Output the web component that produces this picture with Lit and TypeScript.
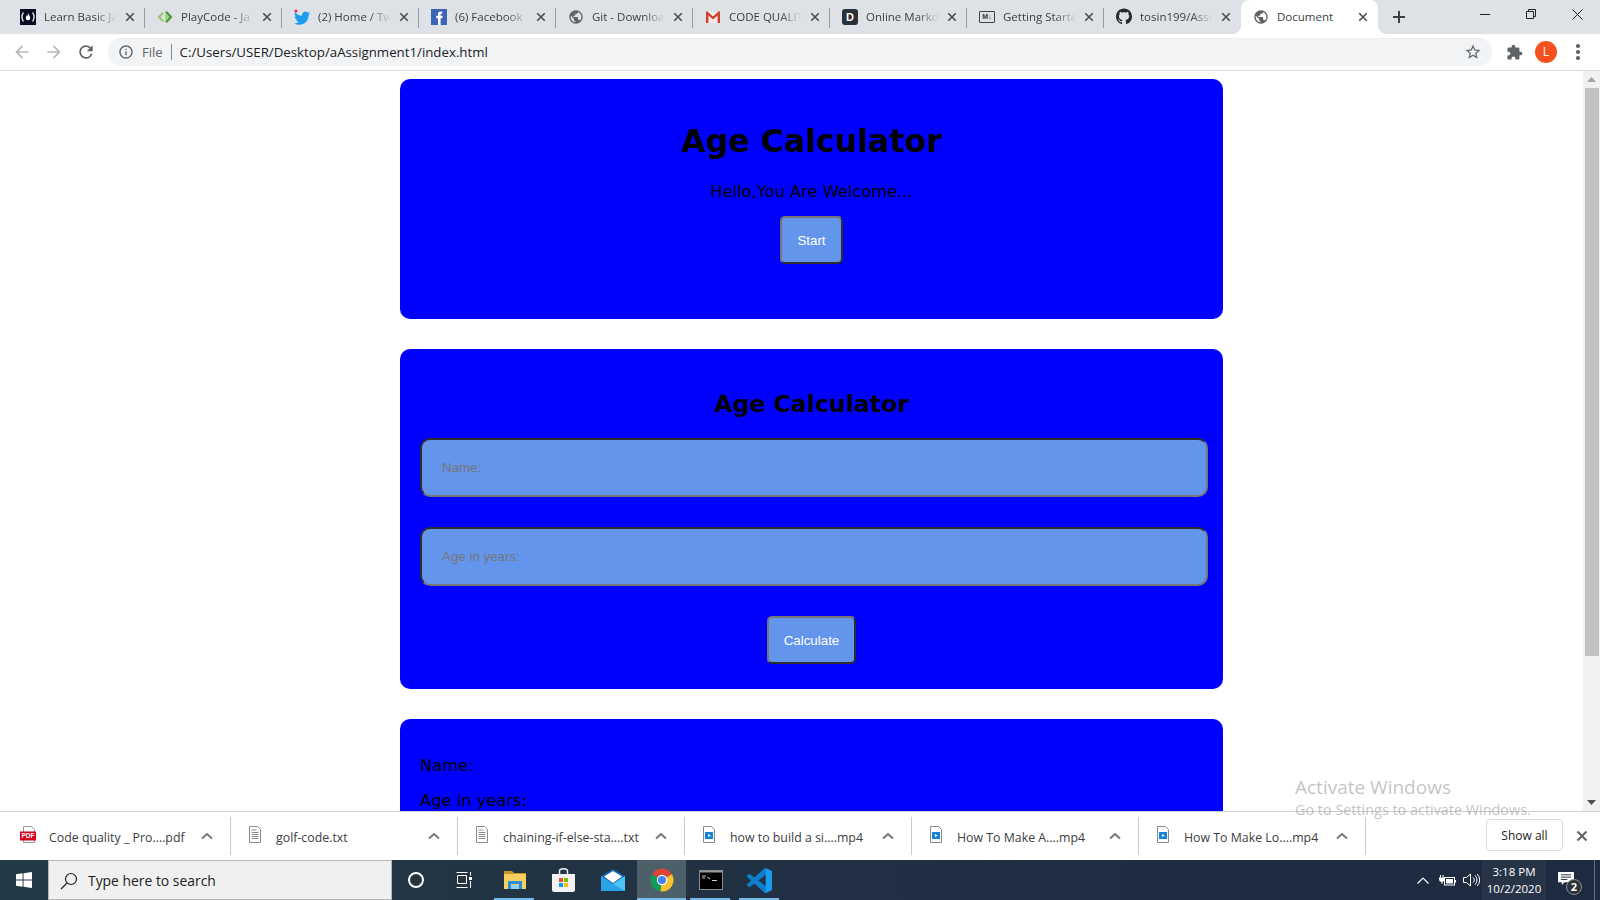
import { LitElement, css, html, svg } from "lit";
import { customElement } from "lit/decorators.js";

const UI_FONT = css`"Open Sans", "Noto Sans", sans-serif`;

const PATHS = {
  globe:
    "M12 2C6.48 2 2 6.48 2 12s4.48 10 10 10 10-4.48 10-10S17.52 2 12 2zm-1 17.93c-3.95-.49-7-3.85-7-7.93 0-.62.08-1.21.21-1.79L9 15v1c0 1.1.9 2 2 2v1.93zm6.9-2.54c-.26-.81-1-1.39-1.9-1.39h-1v-3c0-.55-.45-1-1-1H8v-2h2c.55 0 1-.45 1-1V7h2c1.1 0 2-.9 2-2v-.41c2.93 1.19 5 4.06 5 7.41 0 2.08-.8 3.97-2.1 5.39z",
  twitter:
    "M23.953 4.57a10 10 0 01-2.825.775 4.958 4.958 0 002.163-2.723c-.951.555-2.005.959-3.127 1.184a4.92 4.92 0 00-8.384 4.482C7.69 8.095 4.067 6.13 1.64 3.162a4.822 4.822 0 00-.666 2.475c0 1.71.87 3.213 2.188 4.096a4.904 4.904 0 01-2.228-.616v.06a4.923 4.923 0 003.946 4.827 4.996 4.996 0 01-2.212.085 4.936 4.936 0 004.604 3.417 9.867 9.867 0 01-6.102 2.105c-.39 0-.779-.023-1.17-.067a13.995 13.995 0 007.557 2.209c9.053 0 13.998-7.496 13.998-13.985 0-.21 0-.42-.015-.63A9.935 9.935 0 0024 4.59z",
  github:
    "M8 0C3.58 0 0 3.58 0 8c0 3.54 2.29 6.53 5.47 7.59.4.07.55-.17.55-.38 0-.19-.01-.82-.01-1.49-2.01.37-2.53-.49-2.69-.94-.09-.23-.48-.94-.82-1.13-.28-.15-.68-.52-.01-.53.63-.01 1.08.58 1.23.82.72 1.21 1.87.87 2.33.66.07-.52.28-.87.51-1.07-1.78-.2-3.64-.89-3.64-3.95 0-.87.31-1.59.82-2.15-.08-.2-.36-1.02.08-2.12 0 0 .67-.21 2.2.82.64-.18 1.32-.27 2-.27.68 0 1.36.09 2 .27 1.53-1.04 2.2-.82 2.2-.82.44 1.1.16 1.92.08 2.12.51.56.82 1.27.82 2.15 0 3.07-1.87 3.75-3.65 3.95.29.25.54.73.54 1.48 0 1.07-.01 1.93-.01 2.2 0 .21.15.46.55.38A8.013 8.013 0 0016 8c0-4.42-3.58-8-8-8z",
  back: "M20 11H7.83l5.59-5.59L12 4l-8 8 8 8 1.41-1.41L7.83 13H20v-2z",
  forward: "M4 11h12.17l-5.59-5.59L12 4l8 8-8 8-1.41-1.41L16.17 13H4v-2z",
  reload:
    "M17.65 6.35A7.958 7.958 0 0012 4c-4.42 0-7.99 3.58-7.99 8s3.57 8 7.99 8c3.73 0 6.84-2.55 7.73-6h-2.08A5.99 5.99 0 0112 18c-3.31 0-6-2.69-6-6s2.69-6 6-6c1.66 0 3.14.69 4.22 1.78L13 11h7V4l-2.35 2.35z",
  info: "M11 7h2v2h-2zm0 4h2v6h-2zm1-9C6.48 2 2 6.48 2 12s4.48 10 10 10 10-4.48 10-10S17.52 2 12 2zm0 18c-4.41 0-8-3.59-8-8s3.59-8 8-8 8 3.59 8 8-3.59 8-8 8z",
  star: "M22 9.24l-7.19-.62L12 2 9.19 8.63 2 9.24l5.46 4.73L5.82 21 12 17.27 18.18 21l-1.63-7.03L22 9.24zM12 15.4l-3.76 2.27 1-4.28-3.32-2.88 4.38-.38L12 6.1l1.71 4.04 4.38.38-3.32 2.88 1 4.28L12 15.4z",
  puzzle:
    "M20.5 11H19V7c0-1.1-.9-2-2-2h-4V3.5C13 2.12 11.88 1 10.5 1S8 2.12 8 3.5V5H4c-1.1 0-1.99.9-1.99 2v3.8H3.5c1.49 0 2.7 1.21 2.7 2.7s-1.21 2.7-2.7 2.7H2V20c0 1.1.9 2 2 2h3.8v-1.5c0-1.49 1.21-2.7 2.7-2.7 1.49 0 2.7 1.21 2.7 2.7V22H17c1.1 0 2-.9 2-2v-4h1.5c1.38 0 2.5-1.12 2.5-2.5S21.88 11 20.5 11z",
  vscode:
    "M23.15 2.587L18.21.21a1.494 1.494 0 0 0-1.705.29l-9.46 8.63-4.12-3.128a.999.999 0 0 0-1.276.057L.327 7.261A1 1 0 0 0 .326 8.74L3.899 12 .326 15.26a1 1 0 0 0 .001 1.479L1.65 17.94a.999.999 0 0 0 1.276.057l4.12-3.128 9.46 8.63a1.492 1.492 0 0 0 1.704.29l4.942-2.377A1.5 1.5 0 0 0 24 20.06V3.939a1.5 1.5 0 0 0-.85-1.352zm-5.146 14.861L10.826 12l7.178-5.448v10.896z",
};

const icon = (d: string, size: number, fill = "#5f6368", box = 24) => html`
  <svg width=${size} height=${size} viewBox="0 0 ${box} ${box}" fill=${fill}><path d=${d}></path></svg>
`;

const cross = (size: number, color = "#4a4d51", width = 2) => html`
  <svg width=${size} height=${size} viewBox="0 0 12 12" stroke=${color} stroke-width=${width} fill="none">
    <path d="M1.5 1.5l9 9M10.5 1.5l-9 9"></path>
  </svg>
`;

const chevron = (color = "#777") => html`
  <svg width="12" height="8" viewBox="0 0 12 8" fill="none" stroke=${color} stroke-width="2">
    <path d="M1 6.5l5-4.5 5 4.5"></path>
  </svg>
`;

const favicons: Record<string, () => unknown> = {
  fcc: () => html`
    <svg width="16" height="16" viewBox="0 0 16 16">
      <rect width="16" height="16" fill="#0a0a23"></rect>
      <path d="M3.400 3.500C1.800 6 1.800 10 3.400 12.500M12.600 3.500C14.200 6 14.200 10 12.600 12.500" stroke="#fff" stroke-width="1.300" fill="none"></path>
      <path d="M8 4c.5 1.700 2.200 2.900 2.200 4.900 0 1.300-.9 2.300-2.200 2.300s-2.200-1-2.200-2.300c0-1.200.7-1.800 1.100-2.600.2.500.4.800.6.900.2-.9.200-2.100.5-3.200z" fill="#fff"></path>
    </svg>
  `,
  playcode: () => html`
    <svg width="16" height="16" viewBox="0 0 16 16">
      <path d="M5.500 3L.5 8l5 5 1.400-1.500L3.400 8l3.500-3.500z" fill="#93c763"></path>
      <path d="M10 2l5.500 6-5.500 6-2-1.500L12 8 8 3.500z" fill="#4f9e3c"></path>
      <path d="M8 5l3.500 3L8 11z" fill="#9ad070"></path>
    </svg>
  `,
  twitter: () => html`
    <svg width="16" height="16" viewBox="0 0 16 16">
      <g transform="translate(0 1) scale(.68)"><path d=${PATHS.twitter} fill="#1d9bf0"></path></g>
      <circle cx="2" cy="2" r="1.600" fill="#e0245e"></circle>
    </svg>
  `,
  facebook: () => html`
    <svg width="16" height="16" viewBox="0 0 16 16">
      <rect width="16" height="16" fill="#3b66b5"></rect>
      <path d="M11.200 2.600H9.600C8 2.600 7 3.600 7 5.200v1.600H5.200v2.400H7V16h2.600V9.200h1.700l.3-2.400h-2V5.500c0-.5.2-.8.8-.8h.8z" fill="#fff"></path>
    </svg>
  `,
  globe: () => icon(PATHS.globe, 18, "#5f6368"),
  gmail: () => html`
    <svg width="16" height="16" viewBox="0 0 16 16">
      <rect x="1.500" y="3" width="13" height="11" fill="#f1e9e6"></rect>
      <path d="M1 14V2.600h1.400L8 7.400l5.600-4.800H15V14h-2.400V6.600L8 10.400 3.400 6.600V14z" fill="#d23f31"></path>
    </svg>
  `,
  dabblet: () => html`<span class="fav-d">D</span>`,
  markdown: () => html`<span class="fav-md">M↓</span>`,
  github: () => icon(PATHS.github, 17, "#24292e", 16),
};

const tabs = [
  { title: "Learn Basic Ja", fav: "fcc" },
  { title: "PlayCode - Ja", fav: "playcode" },
  { title: "(2) Home / Tw", fav: "twitter" },
  { title: "(6) Facebook", fav: "facebook" },
  { title: "Git - Downloa", fav: "globe" },
  { title: "CODE QUALIT", fav: "gmail" },
  { title: "Online Markd", fav: "dabblet" },
  { title: "Getting Starte", fav: "markdown" },
  { title: "tosin199/Assi", fav: "github" },
  { title: "Document", fav: "globe", active: true },
];

@customElement("browser-tabs")
class BrowserTabs extends LitElement {
  static styles = css`
    :host {
      display: flex;
      height: 34px;
      padding-left: 8px;
      background: #dee1e6;
      font: 11.5px ${UI_FONT};
      color: #3c4043;
    }
    .tab {
      position: relative;
      box-sizing: border-box;
      width: 137px;
      display: flex;
      align-items: center;
      gap: 8px;
      padding: 0 10px 1px 12px;
    }
    .tab::after {
      content: "";
      position: absolute;
      right: 0;
      top: 8px;
      height: 20px;
      width: 1px;
      background: #999ca0;
    }
    .tab.last::after {
      display: none;
    }
    .tab.active {
      background: #fff;
      border-radius: 8px 8px 0 0;
    }
    .tab.active::before,
    .tab.active::after {
      content: "";
      position: absolute;
      top: auto;
      bottom: 0;
      width: 8px;
      height: 8px;
    }
    .tab.active::before {
      left: -8px;
      background: radial-gradient(circle at 0 0, transparent 7.5px, #fff 8px);
    }
    .tab.active::after {
      right: -8px;
      background: radial-gradient(circle at 100% 0, transparent 7.5px, #fff 8px);
    }
    .fav {
      width: 16px;
      height: 16px;
      flex: none;
      display: flex;
      align-items: center;
      justify-content: center;
    }
    .fav-d {
      width: 16px;
      height: 16px;
      border-radius: 3px;
      background: #2b2f3a;
      color: #fff;
      font: bold 11px/16px "Liberation Sans", sans-serif;
      text-align: center;
    }
    .fav-md {
      width: 16px;
      height: 10px;
      border: 1px solid #444;
      border-radius: 1px;
      color: #333;
      font: bold 7px/10px "Liberation Sans", sans-serif;
      text-align: center;
      white-space: nowrap;
    }
    .title {
      flex: 1;
      min-width: 0;
      overflow: hidden;
      white-space: nowrap;
      -webkit-mask-image: linear-gradient(90deg, #000 70%, transparent);
      mask-image: linear-gradient(90deg, #000 70%, transparent);
    }
    .active .title {
      -webkit-mask-image: none;
      mask-image: none;
    }
    .close {
      flex: none;
      display: flex;
    }
    .new {
      width: 42px;
      display: flex;
      align-items: center;
      justify-content: center;
    }
    .window {
      margin-left: auto;
      display: flex;
    }
    .window span {
      width: 46px;
      height: 28px;
      display: flex;
      align-items: center;
      justify-content: center;
    }
  `;

  render() {
    return html`
      ${tabs.map(
        (tab, i) => html`
          <div class="tab ${tab.active ? "active" : ""} ${i === 8 ? "last" : ""}">
            <span class="fav">${favicons[tab.fav]()}</span>
            <span class="title">${tab.title}</span>
            <span class="close">${cross(10, "#4a4d51", 2)}</span>
          </div>
        `
      )}
      <div class="new">
        <svg width="14" height="14" viewBox="0 0 14 14" stroke="#3c4043" stroke-width="2"><path d="M7 1v12M1 7h12"></path></svg>
      </div>
      <div class="window">
        <span><svg width="10" height="10" viewBox="0 0 10 10" stroke="#222"><path d="M0 5.500h10"></path></svg></span>
        <span>
          <svg width="10" height="10" viewBox="0 0 10 10" stroke="#222" fill="none">
            <path d="M.5 2.500h7v7h-7zM2.500 2.500v-2h7v7h-2"></path>
          </svg>
        </span>
        <span><svg width="11" height="11" viewBox="0 0 11 11" stroke="#222"><path d="M.5.5l10 10M10.500.5l-10 10"></path></svg></span>
      </div>
    `;
  }
}

@customElement("browser-toolbar")
class BrowserToolbar extends LitElement {
  static styles = css`
    :host {
      display: flex;
      align-items: center;
      box-sizing: border-box;
      height: 37px;
      padding: 0 6px;
      background: #fff;
      border-bottom: 1px solid #dadce0;
      font: 13.27px ${UI_FONT};
      color: #202124;
    }
    .nav {
      width: 32px;
      display: flex;
      justify-content: center;
      flex: none;
    }
    .omnibox {
      flex: 1;
      height: 28px;
      margin: 0 6px;
      padding: 0 10px;
      border-radius: 14px;
      background: #f1f3f4;
      display: flex;
      align-items: center;
    }
    .file {
      margin-left: 8px;
      padding-right: 8px;
      border-right: 1px solid #888;
      line-height: 16px;
      color: #5f6368;
      font-size: 13px;
    }
    .url {
      margin-left: 8px;
      flex: 1;
    }
    .avatar {
      width: 22px;
      height: 22px;
      border-radius: 50%;
      background: #f4511e;
      color: #fff;
      font-size: 12px;
      line-height: 22px;
      text-align: center;
    }
    .dots {
      display: flex;
      flex-direction: column;
      align-items: center;
      gap: 2.5px;
    }
    .dots i {
      width: 3.5px;
      height: 3.5px;
      border-radius: 50%;
      background: #5f6368;
    }
  `;

  render() {
    return html`
      <span class="nav">${icon(PATHS.back, 20, "#b6b8bb")}</span>
      <span class="nav">${icon(PATHS.forward, 20, "#b6b8bb")}</span>
      <span class="nav">${icon(PATHS.reload, 20, "#5f6368")}</span>
      <div class="omnibox">
        ${icon(PATHS.info, 16, "#5f6368")}
        <span class="file">File</span>
        <span class="url">C:/Users/USER/Desktop/aAssignment1/index.html</span>
        ${icon(PATHS.star, 18, "#5f6368")}
      </div>
      <span class="nav">${icon(PATHS.puzzle, 17, "#5f6368")}</span>
      <span class="nav"><span class="avatar">L</span></span>
      <span class="nav"><span class="dots"><i></i><i></i><i></i></span></span>
    `;
  }
}

@customElement("age-page")
class AgePage extends LitElement {
  static styles = css`
    :host {
      flex: 1;
      min-height: 0;
      display: flex;
      overflow: hidden;
      background: #fff;
    }
    .content {
      flex: 1;
      min-width: 0;
      padding: 8px 0 0 400px;
      display: flex;
      flex-direction: column;
      gap: 30px;
      font: 16.3px "DejaVu Sans", Verdana, sans-serif;
      color: #000;
    }
    .card {
      box-sizing: border-box;
      width: 823px;
      background: #00f;
      border-radius: 10px;
      text-align: center;
    }
    .welcome {
      padding: 43px 0 55px;
    }
    .form {
      padding: 41px 20px 25px;
    }
    .result {
      padding: 37px 20px 40px;
      text-align: left;
      flex: none;
    }
    h1,
    h2,
    p {
      margin: 0;
    }
    h1 {
      font-size: 31.6px;
      line-height: 38px;
    }
    h2 {
      font-size: 23.6px;
      line-height: 28px;
    }
    p {
      line-height: 20px;
    }
    .welcome p {
      margin-top: 22px;
    }
    .result p + p {
      margin-top: 15px;
    }
    button,
    input {
      box-sizing: border-box;
      border-width: 2px;
      border-style: solid;
      background: #6495ed;
      font-family: "Liberation Sans", Arial, sans-serif;
      font-size: 13.33px;
    }
    button {
      display: block;
      height: 48px;
      margin: 30px auto 0;
      padding: 0 15px;
      border-radius: 5px;
      border-color: #767676 #2d2d2d #2d2d2d #767676;
      color: #fff;
    }
    .welcome button {
      margin-top: 14px;
    }
    input {
      display: block;
      width: 788px;
      height: 59px;
      margin-top: 20px;
      padding: 0 20px;
      border-radius: 10px;
      border-color: #2d2d2d #767676 #767676 #2d2d2d;
      outline: none;
    }
    input + input {
      margin-top: 30px;
    }
    input::placeholder {
      color: #757575;
    }
    .scrollbar {
      width: 17px;
      flex: none;
      background: #f1f1f1;
      display: flex;
      flex-direction: column;
      align-items: center;
    }
    .arrow {
      height: 17px;
      display: flex;
      align-items: center;
      justify-content: center;
      flex: none;
    }
    .thumb {
      width: 14px;
      height: 568px;
      background: #c1c1c1;
      flex: none;
    }
    .spacer {
      flex: 1;
    }
  `;

  render() {
    return html`
      <div class="content">
        <section class="card welcome">
          <h1>Age Calculator</h1>
          <p>Hello,You Are Welcome...</p>
          <button>Start</button>
        </section>
        <section class="card form">
          <h2>Age Calculator</h2>
          <input type="text" placeholder="Name:" />
          <input type="text" placeholder="Age in years:" />
          <button>Calculate</button>
        </section>
        <section class="card result">
          <p>Name:</p>
          <p>Age in years:</p>
        </section>
      </div>
      <div class="scrollbar">
        <span class="arrow"><svg width="9" height="5" viewBox="0 0 9 5" fill="#a3a3a3"><path d="M4.500 0L9 5H0z"></path></svg></span>
        <div class="thumb"></div>
        <div class="spacer"></div>
        <span class="arrow"><svg width="9" height="5" viewBox="0 0 9 5" fill="#505050"><path d="M0 0h9L4.500 5z"></path></svg></span>
      </div>
    `;
  }
}

const docIcon = svg`
  <path d="M2.500.5h8l3 3v13h-11z" fill="#fff" stroke="#8a8a8a"></path>
  <path d="M4.500 4h5M4.500 6.500h7M4.500 8.500h7M4.500 10.500h7M4.500 12.500h7" stroke="#8a8a8a"></path>
`;
const videoIcon = svg`
  <path d="M2.500.5h8l3 3v13h-11z" fill="#fff" stroke="#8a8a8a"></path>
  <rect x="4" y="6" width="8" height="7" fill="#1483d8"></rect>
  <path d="M7 8l3 1.500L7 11z" fill="#fff"></path>
`;
const pdfIcon = svg`
  <path d="M3.500.5h8l3 3v13h-11z" fill="#fff" stroke="#999"></path>
  <rect y="5.500" width="16" height="9" fill="#d8001b"></rect>
`;

const downloads = [
  { name: "Code quality _ Pro....pdf", kind: pdfIcon, pdf: true },
  { name: "golf-code.txt", kind: docIcon },
  { name: "chaining-if-else-sta....txt", kind: docIcon },
  { name: "how to build a si....mp4", kind: videoIcon },
  { name: "How To Make A....mp4", kind: videoIcon },
  { name: "How To Make Lo....mp4", kind: videoIcon },
];

@customElement("downloads-bar")
class DownloadsBar extends LitElement {
  static styles = css`
    :host {
      display: flex;
      align-items: center;
      box-sizing: border-box;
      height: 49px;
      padding-left: 4px;
      padding-right: 12px;
      background: #fff;
      border-top: 1px solid #d0d1d3;
      font: 12.35px ${UI_FONT};
      color: #3c4043;
    }
    .item {
      box-sizing: border-box;
      width: 227px;
      height: 38px;
      padding-right: 17px;
      display: flex;
      align-items: center;
      border-right: 1px solid #c8c9cb;
    }
    .file {
      width: 24px;
      margin-left: 12px;
      margin-right: 9px;
      margin-top: -4px;
      display: flex;
      justify-content: center;
      flex: none;
      position: relative;
    }
    .pdf-label {
      position: absolute;
      left: 4px;
      top: 5px;
      width: 16px;
      color: #fff;
      font: bold 6.5px/9px "Liberation Sans", sans-serif;
      text-align: center;
    }
    .name {
      flex: 1;
      white-space: nowrap;
      padding-top: 2px;
    }
    .show-all {
      box-sizing: border-box;
      margin-left: auto;
      width: 77px;
      height: 32px;
      margin-top: -2px;
      border: 1px solid #dadce0;
      border-radius: 4px;
      display: flex;
      align-items: center;
      justify-content: center;
      color: #202124;
      font-size: 12px;
    }
    .close {
      display: flex;
      margin-left: 13px;
    }
  `;

  render() {
    return html`
      ${downloads.map(
        (d) => html`
          <div class="item">
            <span class="file">
              <svg width="16" height="17" viewBox="0 0 16 17">${d.kind}</svg>
              ${d.pdf ? html`<span class="pdf-label">PDF</span>` : ""}
            </span>
            <span class="name">${d.name}</span>
            ${chevron()}
          </div>
        `
      )}
      <div class="show-all">Show all</div>
      <span class="close">${cross(12, "#5f6368", 2)}</span>
    `;
  }
}

@customElement("win-taskbar")
class WinTaskbar extends LitElement {
  static styles = css`
    :host {
      display: flex;
      align-items: stretch;
      height: 40px;
      background: linear-gradient(90deg, #233b46, #1f2b41 75%, #1e2a40);
      font: 11.5px ${UI_FONT};
      color: #fff;
    }
    .start {
      width: 47px;
      padding-right: 1px;
      display: flex;
      align-items: center;
      justify-content: center;
      flex: none;
    }
    .search {
      box-sizing: border-box;
      width: 344px;
      flex: none;
      display: flex;
      align-items: center;
      gap: 10px;
      padding: 1px 0 0 11px;
      background: #f0f0f0;
      border: 1px solid #b4b6b8;
      color: #222;
      font-size: 13.9px;
    }
    .cell {
      position: relative;
      width: 49px;
      flex: none;
      display: flex;
      align-items: center;
      justify-content: center;
    }
    .cell.open::after {
      content: "";
      position: absolute;
      left: 4px;
      right: 5px;
      bottom: 0;
      height: 2px;
      background: #76b9ed;
    }
    .cell.active {
      background: #4d5f69;
    }
    .cell.active::after {
      left: 0;
      right: 0;
    }
    .ring {
      margin-right: 1px;
    }
    .task-view {
      margin-right: 4px;
    }
    .tray {
      margin-left: auto;
      display: flex;
      align-items: center;
    }
    .tray-icon {
      width: 24.5px;
      display: flex;
      justify-content: center;
    }
    .clock {
      width: 64px;
      align-self: stretch;
      background: #273448;
      display: flex;
      flex-direction: column;
      align-items: center;
      justify-content: center;
      line-height: 17px;
    }
    .tray-icons {
      display: flex;
      align-items: center;
      margin-right: -2px;
    }
    .notify {
      position: relative;
      box-sizing: border-box;
      width: 48px;
      padding: 0 0 3px 12px;
      display: flex;
    }
    .count {
      position: absolute;
      left: 20px;
      top: 7px;
      width: 16px;
      height: 16px;
      border-radius: 50%;
      background: #2d3238;
      border: 1px solid #8a8f96;
      box-sizing: border-box;
      font: bold 11px/14px ${UI_FONT};
      text-align: center;
    }
    .desktop {
      width: 5px;
      align-self: stretch;
      border-left: 1px solid #66707c;
    }
  `;

  render() {
    return html`
      <div class="start">
        <svg width="16" height="16" viewBox="0 0 17 17" fill="#fff">
          <path d="M0 2.400l7-1v6.700H0zM8 1.200L17 0v8.100H8zM0 9h7v6.700l-7-1zM8 9h9v8l-9-1.200z"></path>
        </svg>
      </div>
      <div class="search">
        <svg width="18" height="18" viewBox="0 0 18 18" fill="none" stroke="#222" stroke-width="1.200">
          <circle cx="11" cy="7" r="5.500"></circle>
          <path d="M7 11l-6 6"></path>
        </svg>
        <span>Type here to search</span>
      </div>
      <div class="cell">
        <svg class="ring" width="16" height="16" viewBox="0 0 16 16" fill="none" stroke="#fff" stroke-width="2"><circle cx="8" cy="8" r="7"></circle></svg>
      </div>
      <div class="cell">
        <svg class="task-view" width="16" height="16" viewBox="0 0 16 16" fill="none" stroke="#fff">
          <path d="M.5 .5h11M1.500 3.500h9v8h-9zM.5 15.500h11M14.500 0v3.500M14.500 9v7"></path>
          <rect x="13" y="5" width="3" height="3" fill="#fff" stroke="none"></rect>
        </svg>
      </div>
      <div class="cell open">
        <svg width="22" height="18" viewBox="0 0 22 18">
          <path d="M0 0h8l2 2h12v2H0z" fill="#c9952a"></path>
          <rect x="0" y="3" width="22" height="15" fill="#f6cf60"></rect>
          <path d="M4 10h14v8h-3v-5H7v5H4z" fill="#2a8fdb"></path>
          <rect x="7" y="14" width="8" height="4" fill="#8fd0f5"></rect>
        </svg>
      </div>
      <div class="cell">
        <svg width="23" height="24" viewBox="0 0 23 24">
          <path d="M7.500 6V3c0-3 8-3 8 0v3" fill="none" stroke="#eee" stroke-width="1.500"></path>
          <path d="M0 6h23v16a2 2 0 01-2 2H2a2 2 0 01-2-2z" fill="#f3f3f3"></path>
          <rect x="7" y="10" width="4" height="4" fill="#f25022"></rect>
          <rect x="12" y="10" width="4" height="4" fill="#7fba00"></rect>
          <rect x="7" y="15" width="4" height="4" fill="#00a4ef"></rect>
          <rect x="12" y="15" width="4" height="4" fill="#ffb900"></rect>
        </svg>
      </div>
      <div class="cell">
        <svg width="24" height="22" viewBox="0 0 24 22">
          <path d="M0 7l12-7 12 7v15H0z" fill="#0f64ad"></path>
          <path d="M3 7.500L12 2l9 5.500L12 14z" fill="#fff"></path>
          <path d="M0 7l12 8 12-8v15H0z" fill="#2aa3e8"></path>
          <path d="M24 7v15L12 15z" fill="#4fc3f5"></path>
        </svg>
      </div>
      <div class="cell open active">
        <svg width="24" height="24" viewBox="0 0 24 24">
          <path d="M12 12L2.040 6.250A11.500 11.500 0 0121.960 6.250z" fill="#db4437"></path>
          <path d="M12 12L10.500 23.400A11.500 11.500 0 012.040 6.250z" fill="#0f9d58"></path>
          <path d="M12 12L21.960 6.250A11.500 11.500 0 0110.500 23.400z" fill="#fbc02d"></path>
          <circle cx="12" cy="12" r="5.200" fill="#fff"></circle>
          <circle cx="12" cy="12" r="4.100" fill="#4285f4"></circle>
        </svg>
      </div>
      <div class="cell open">
        <svg width="24" height="20" viewBox="0 0 24 20">
          <rect width="24" height="20" fill="#000"></rect>
          <rect width="24" height="2.500" fill="#9a9a9a"></rect>
          <rect x=".5" y=".5" width="23" height="19" fill="none" stroke="#8c8c8c"></rect>
          <path d="M3 6h4M3 8h3M8 7l3 2M13 10.500h5" stroke="#ccc"></path>
        </svg>
      </div>
      <div class="cell open">
        <svg width="25" height="25" viewBox="0 0 24 24">
          <path d=${PATHS.vscode} fill="#0e7fcf"></path>
          <path d="M18 0v24l5.150-2.450A1.500 1.500 0 0024 20.060V3.940a1.500 1.500 0 00-.85-1.350L18.210.21z" fill="#1c9bef"></path>
        </svg>
      </div>
      <div class="tray">
        <div class="tray-icons">
          <span class="tray-icon">
            <svg width="12" height="7" viewBox="0 0 12 7" fill="none" stroke="#fff" stroke-width="1.200"><path d="M.5 6.500L6 1l5.500 5.500"></path></svg>
          </span>
          <span class="tray-icon">
            <svg width="17" height="11" viewBox="0 0 17 11" fill="#fff">
              <path d="M1.500 0v2.500M4 0v2.500" stroke="#fff"></path>
              <path d="M0 2.500h5.500v2a2.500 2.500 0 01-2 2.400V9h-1V6.900a2.500 2.500 0 01-2.500-2.400z"></path>
              <rect x="5.500" y="2.500" width="10" height="7.500" fill="none" stroke="#fff"></rect>
              <rect x="7" y="4" width="7" height="4.500"></rect>
              <rect x="16" y="5" width="1" height="2.500"></rect>
            </svg>
          </span>
          <span class="tray-icon">
            <svg width="17" height="14" viewBox="0 0 17 14" fill="none" stroke="#fff">
              <path d="M.5 4.500h3l4-3.500v12l-4-3.500h-3zM10 4.500a3 3 0 010 5M12 2.500a6 6 0 010 9M14 1a8 8 0 010 12"></path>
            </svg>
          </span>
        </div>
        <div class="clock"><span>3:18 PM</span><span>10/2/2020</span></div>
        <div class="notify">
          <svg width="16" height="14" viewBox="0 0 17 15" fill="#fff">
            <path d="M0 0h17v11H7l-3 3v-3H0z"></path>
            <path d="M3 3h11M3 5.500h11M3 8h7" stroke="#1f2b41"></path>
          </svg>
          <span class="count">2</span>
        </div>
        <div class="desktop"></div>
      </div>
    `;
  }
}

@customElement("app-root")
class AppRoot extends LitElement {
  static styles = css`
    :host {
      display: flex;
      flex-direction: column;
      position: relative;
      height: 900px;
      overflow: hidden;
    }
    .activate {
      position: absolute;
      left: 1295px;
      top: 773px;
      color: rgba(120, 120, 120, 0.45);
      font-family: ${UI_FONT};
      font-size: 14.4px;
      line-height: 18px;
      white-space: nowrap;
      pointer-events: none;
    }
    .activate div:first-child {
      font-size: 19px;
      line-height: 28px;
    }
  `;

  render() {
    return html`
      <browser-tabs></browser-tabs>
      <browser-toolbar></browser-toolbar>
      <age-page></age-page>
      <downloads-bar></downloads-bar>
      <win-taskbar></win-taskbar>
      <div class="activate">
        <div>Activate Windows</div>
        <div>Go to Settings to activate Windows.</div>
      </div>
    `;
  }
}
